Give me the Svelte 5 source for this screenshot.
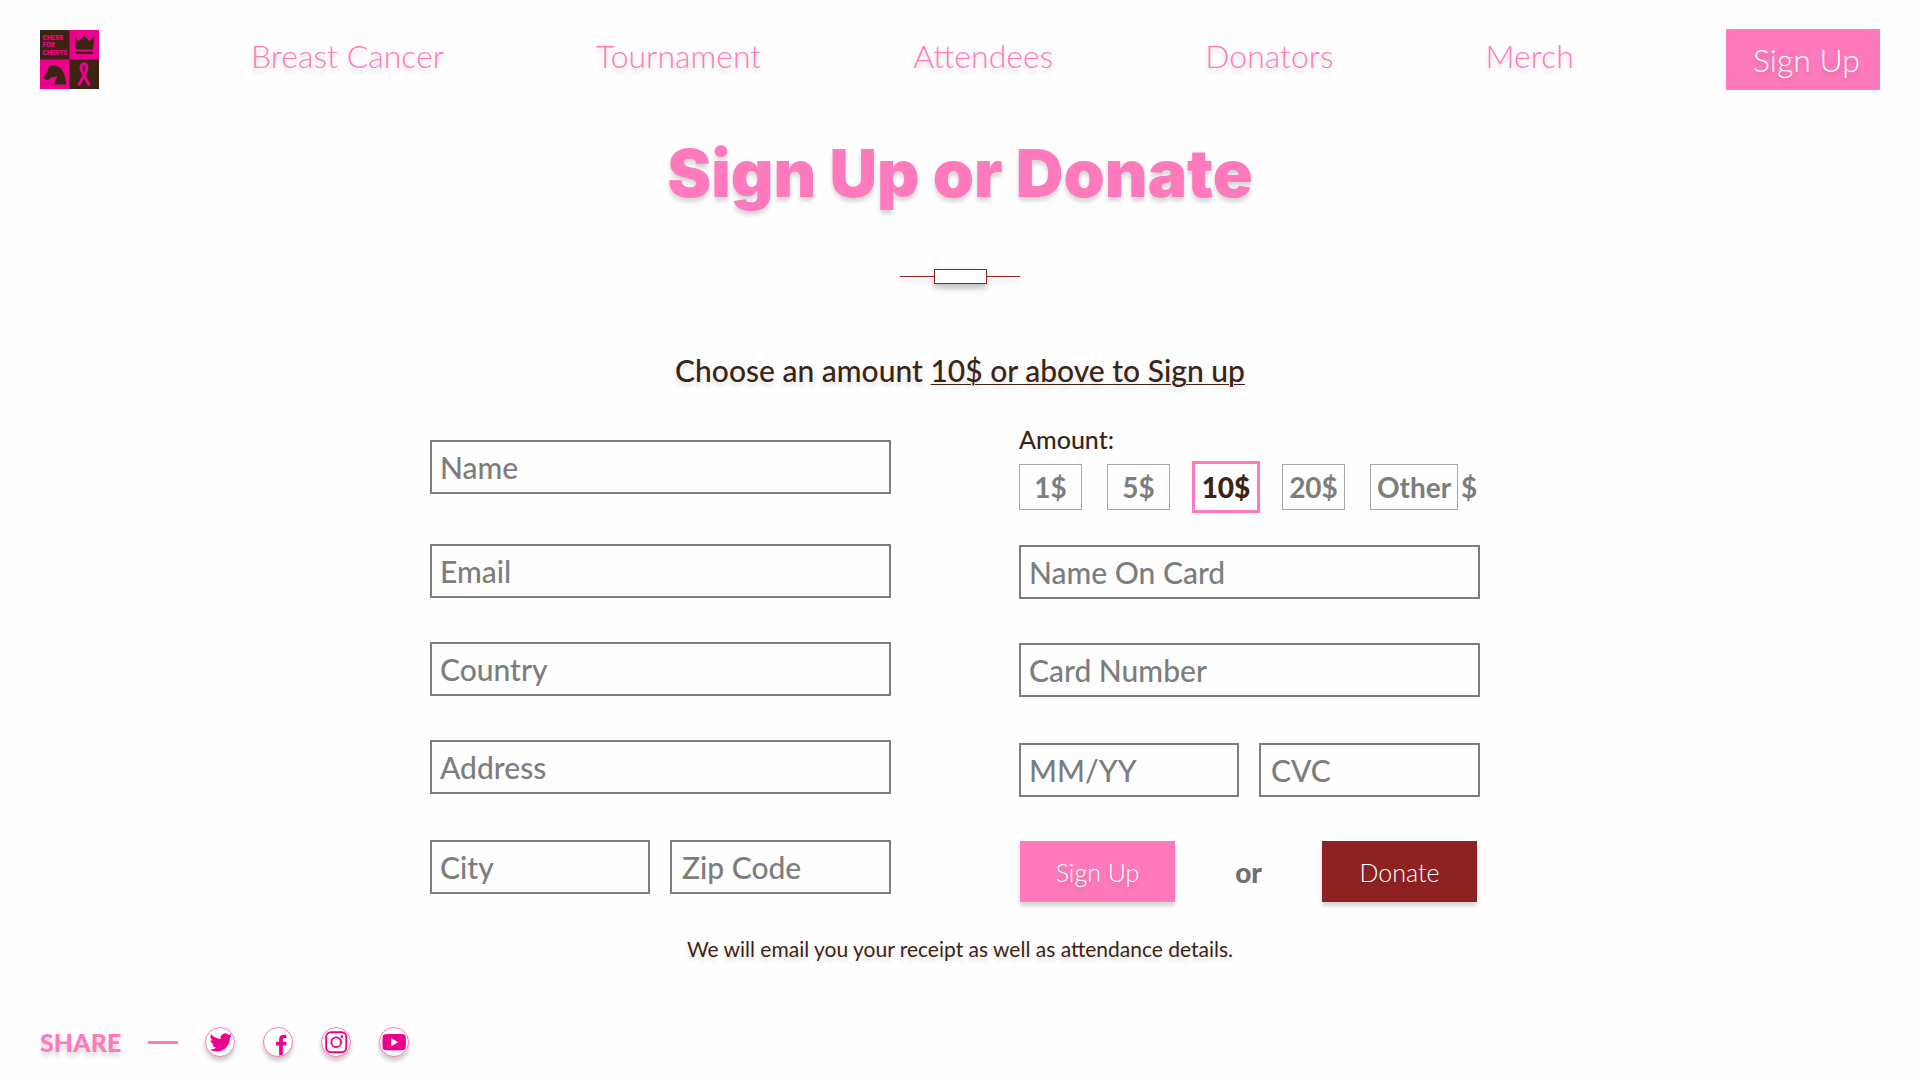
<script>
  const links = ['Breast Cancer', 'Tournament', 'Attendees', 'Donators', 'Merch'];
  const amounts = ['1', '5', '10', '20'];
  let amount = $state('10');
</script>

<div class="page">
  <header>
    <a class="logo" href="#home" aria-label="Chess for Chests">
      <svg viewBox="0 0 59 59" width="59" height="59" aria-hidden="true">
        <path fill="#ec008c" d="M0 0h59v59H0z" />
        <path fill="#3c2415" d="M0 0h29.500v29.500H0zM29.500 29.500H59V59H29.500z" />
        <g class="logo-text" fill="#ec008c">
          <text x="2.500" y="9.500">CHESS</text>
          <text x="2.500" y="17">FOR</text>
          <text x="2.500" y="24.500">CHESTS</text>
        </g>
        <path fill="#3c2415" d="M34.500 6.200l4.200 5 5.500-5.400 5.300 5.400 4.700-5-1 13.300H35.700zM35.500 21.500H53V24H35.500z" />
        <path
          fill="#3c2415"
          d="M10 34.500l2 1.300c6.500-1 10.500 3 12.300 8.500 1.300 4 1.700 7 1.800 10.200H14.300c.1-3.700 2.600-5.700 3-8.700-2 1.200-4.400 1.300-6.200 1.700l-3.700 3-.9-1-1.200.6-1.800-2.700 4.200-6.300c.3-2.300 1-4.600 2.300-6.600z"
        />
        <path
          fill="none"
          stroke="#ec008c"
          stroke-width="3"
          d="M38.700 55.500c2.500-6 8.200-12.500 8.200-18 0-4.600-5.800-4.600-5.800 0 0 5.500 5.800 12 8.300 18"
        />
      </svg>
    </a>
    {#each links as link}
      <a class="link" href="#{link.toLowerCase().replace(' ', '-')}">{link}</a>
    {/each}
    <a class="cta" href="#signup">Sign Up</a>
  </header>

  <main>
    <h1>Sign Up or Donate</h1>
    <div class="divider"><span></span></div>
    <p class="lead">Choose an amount <u>10$ or above to Sign up</u></p>

    <form onsubmit={(e) => e.preventDefault()}>
      <div class="column personal">
        <input class="field" aria-label="Name" placeholder="Name" />
        <input class="field" type="email" aria-label="Email" placeholder="Email" />
        <input class="field" aria-label="Country" placeholder="Country" />
        <input class="field" aria-label="Address" placeholder="Address" />
        <div class="pair">
          <input class="field" aria-label="City" placeholder="City" />
          <input class="field" aria-label="Zip Code" placeholder="Zip Code" />
        </div>
      </div>

      <div class="column payment">
        <fieldset>
          <legend>Amount:</legend>
          <div class="amounts">
            {#each amounts as value}
              <label class="amount" class:selected={amount === value}>
                <input type="radio" name="amount" {value} bind:group={amount} />{value}$
              </label>
            {/each}
            <label class="other"><input aria-label="Other amount" placeholder="Other" />$</label>
          </div>
        </fieldset>
        <input class="field" aria-label="Name On Card" placeholder="Name On Card" />
        <input class="field" aria-label="Card Number" placeholder="Card Number" />
        <div class="pair">
          <input class="field" aria-label="Expiry date" placeholder="MM/YY" />
          <input class="field" aria-label="CVC" placeholder="CVC" />
        </div>
        <div class="actions">
          <button class="signup" type="submit">Sign Up</button>
          <span>or</span>
          <button class="donate" type="button">Donate</button>
        </div>
      </div>
    </form>
    <p class="note">We will email you your receipt as well as attendance details.</p>
  </main>

  <footer>
    <span class="share">SHARE</span>
    <span class="dash"></span>
    <div class="socials">
      <a href="#twitter" aria-label="Twitter">
        <svg viewBox="0 0 30 30" aria-hidden="true">
          <path
            transform="translate(4 3.500)"
            d="M23.950 4.570a10 10 0 0 1-2.820.770 4.960 4.960 0 0 0 2.160-2.720c-.950.550-2 .950-3.130 1.180a4.920 4.920 0 0 0-8.380 4.480C7.690 8.100 4.070 6.130 1.640 3.160a4.920 4.920 0 0 0 1.520 6.570 4.900 4.900 0 0 1-2.230-.610v.060a4.920 4.920 0 0 0 3.950 4.830 5 5 0 0 1-2.210.080 4.940 4.940 0 0 0 4.600 3.420A9.870 9.870 0 0 1 0 19.540a13.990 13.990 0 0 0 7.550 2.210c9.050 0 14-7.500 14-13.980 0-.210 0-.420-.020-.630a9.940 9.940 0 0 0 2.420-2.570z"
          />
        </svg>
      </a>
      <a href="#facebook" aria-label="Facebook">
        <svg viewBox="0 0 30 30" aria-hidden="true">
          <path d="M16.200 29.300V18.700H12.800v-4h3.400v-2.500c0-3.300 2-4.900 4.900-4.900 1.300 0 2.300.1 2.900.2v3.300h-2c-1.500 0-1.800.8-1.800 1.900v2H24.200l-.5 4h-3.500v9.700c-1.200.6-2.600.9-4 .9z" />
        </svg>
      </a>
      <a href="#instagram" aria-label="Instagram">
        <svg viewBox="0 0 30 30" aria-hidden="true">
          <rect x="4.500" y="4.500" width="21.500" height="21.500" rx="5" fill="none" stroke="#ec008c" stroke-width="2" />
          <circle cx="15.200" cy="15.200" r="5.200" fill="none" stroke="#ec008c" stroke-width="2" />
          <circle cx="21.300" cy="9.300" r="1.400" />
        </svg>
      </a>
      <a href="#youtube" aria-label="YouTube">
        <svg viewBox="0 0 30 30" aria-hidden="true">
          <path
            fill-rule="evenodd"
            d="M5.500 6.800C12 6.300 18 6.300 25 6.800c1.800.2 2.500 1.200 2.600 3 .3 3.600.3 7.200 0 10.800-.1 1.800-.8 2.800-2.600 3-7 .5-13 .5-19.500 0-1.800-.2-2.600-1.200-2.700-3-.3-3.600-.3-7.200 0-10.800.1-1.800.9-2.800 2.700-3zM12 10.800v9l7.500-4.500z"
          />
        </svg>
      </a>
    </div>
  </footer>
</div>

<style>
  :global(body) {
    margin: 0;
    background: #fefefe;
  }
  .page {
    --pink: #ff7abc;
    --brown: #3c2415;
    --gray: #7d7d7d;
    --glow: 0 4px 4px rgba(0, 0, 0, 0.16);
    box-sizing: border-box;
    min-height: 100vh;
    padding: 29px 40px 23px;
    display: flex;
    flex-direction: column;
    font-family: Lato, 'Liberation Sans', sans-serif;
    color: var(--brown);
  }
  .page *,
  .page *::before,
  .page *::after {
    box-sizing: border-box;
  }
  header {
    display: flex;
    justify-content: space-between;
    align-items: center;
  }
  a {
    text-decoration: none;
  }
  .logo,
  .logo svg {
    display: block;
  }
  .logo-text {
    font-family: Inter, Lato, sans-serif;
    font-size: 6px;
    font-weight: 900;
  }
  .link {
    color: var(--pink);
    font-size: 32px;
    line-height: 40px;
    font-weight: 300;
    padding-bottom: 8px;
    text-shadow: var(--glow);
  }
  .cta {
    background: var(--pink);
    color: #fff;
    font-size: 32px;
    line-height: 61px;
    font-weight: 300;
    padding: 0 20px 0 27px;
    text-shadow: var(--glow);
  }
  main {
    display: flex;
    flex-direction: column;
    align-items: center;
  }
  h1 {
    margin: 43px 0 0;
    font-family: Inter, Lato, sans-serif;
    font-size: 66px;
    line-height: 80px;
    font-weight: 900;
    color: var(--pink);
    text-shadow: var(--glow);
  }
  .divider {
    width: 120px;
    margin-top: 56px;
    display: flex;
    align-items: center;
    filter: drop-shadow(0 4px 3px rgba(0, 0, 0, 0.25));
  }
  .divider::before,
  .divider::after {
    content: '';
    flex: 1;
    height: 1px;
    background: #8f2222;
  }
  .divider span {
    width: 53px;
    height: 15px;
    border: 1px solid #8f2222;
    background: #fff;
  }
  .lead {
    margin: 66px 0 0;
    font-size: 30px;
    line-height: 40px;
    font-weight: 500;
    text-shadow: 0 4px 4px rgba(60, 36, 21, 0.12);
  }
  u {
    text-decoration-thickness: 1px;
    text-underline-offset: 2px;
  }
  form {
    width: 100%;
    max-width: 1060px;
    margin-top: 35px;
    padding-right: 10px;
    display: grid;
    grid-template-columns: 1fr 1fr;
    column-gap: 128px;
  }
  .column {
    display: flex;
    flex-direction: column;
    gap: 44px;
  }
  .personal {
    padding-top: 15px;
  }
  .personal .field:first-child {
    margin-bottom: 6px;
  }
  .field {
    width: 100%;
    min-width: 0;
    height: 54px;
    padding: 0 8px;
    border: 2px solid var(--gray);
    border-radius: 0;
    background: transparent;
    color: var(--brown);
    font: 500 30px/36px Lato, 'Liberation Sans', sans-serif;
  }
  input::placeholder {
    color: var(--gray);
    opacity: 1;
  }
  .pair {
    display: flex;
    gap: 20px;
    margin-top: 2px;
  }
  .pair .field:last-child {
    padding-left: 10px;
  }
  .personal .pair .field:first-child {
    margin-bottom: 0;
  }
  fieldset {
    margin: 0 0 -12px;
    padding: 0;
    border: 0;
    min-width: 0;
  }
  legend {
    padding: 0;
    font-size: 25px;
    line-height: 28px;
    font-weight: 500;
  }
  .amounts {
    display: flex;
    align-items: center;
    gap: 25px;
    padding-top: 8px;
  }
  .amount {
    display: flex;
    align-items: center;
    justify-content: center;
    width: 63px;
    height: 46px;
    border: 1px solid #a6a6a6;
    color: var(--gray);
    font-size: 28px;
    font-weight: 700;
    cursor: pointer;
  }
  .amount input {
    position: absolute;
    opacity: 0;
    pointer-events: none;
  }
  .amount.selected {
    width: 68px;
    height: 52px;
    margin: 0 -3px;
    border: 3px solid var(--pink);
    color: var(--brown);
    font-weight: 900;
  }
  .other {
    display: flex;
    align-items: center;
    gap: 3px;
    color: var(--gray);
    font-size: 28px;
    font-weight: 700;
  }
  .other input {
    width: 88px;
    height: 46px;
    padding: 0;
    border: 1px solid #a6a6a6;
    border-radius: 0;
    background: transparent;
    font: inherit;
    text-align: center;
    color: inherit;
  }
  .actions {
    display: flex;
    justify-content: space-between;
    align-items: center;
    padding: 0 3px 0 1px;
  }
  .actions span {
    color: #6f6f6f;
    font-size: 28px;
    font-weight: 900;
  }
  button {
    width: 155px;
    height: 61px;
    padding: 0;
    border: 0;
    color: #fff;
    font: 300 25px/30px Lato, 'Liberation Sans', sans-serif;
    text-shadow: var(--glow);
    box-shadow: 0 4px 4px rgba(0, 0, 0, 0.16);
    cursor: pointer;
  }
  .signup {
    background: var(--pink);
  }
  .donate {
    background: #8f2222;
  }
  .note {
    margin: 35px 0 0;
    font-size: 21px;
    line-height: 24px;
    text-shadow: 0 4px 4px rgba(60, 36, 21, 0.12);
  }
  footer {
    margin-top: auto;
    display: flex;
    align-items: center;
    gap: 27px;
  }
  .share {
    color: var(--pink);
    font-size: 25px;
    line-height: 30px;
    font-weight: 900;
    text-shadow: var(--glow);
  }
  .dash {
    width: 30px;
    height: 3px;
    background: var(--pink);
  }
  .socials {
    display: flex;
    gap: 28px;
  }
  .socials a {
    display: block;
    width: 30px;
    height: 30px;
    border: 1px solid var(--pink);
    border-radius: 50%;
    background: #fff;
    box-shadow: 0 4px 4px rgba(0, 0, 0, 0.2);
  }
  .socials svg {
    display: block;
    width: 28px;
    height: 28px;
    overflow: visible;
    fill: #ec008c;
  }
</style>
